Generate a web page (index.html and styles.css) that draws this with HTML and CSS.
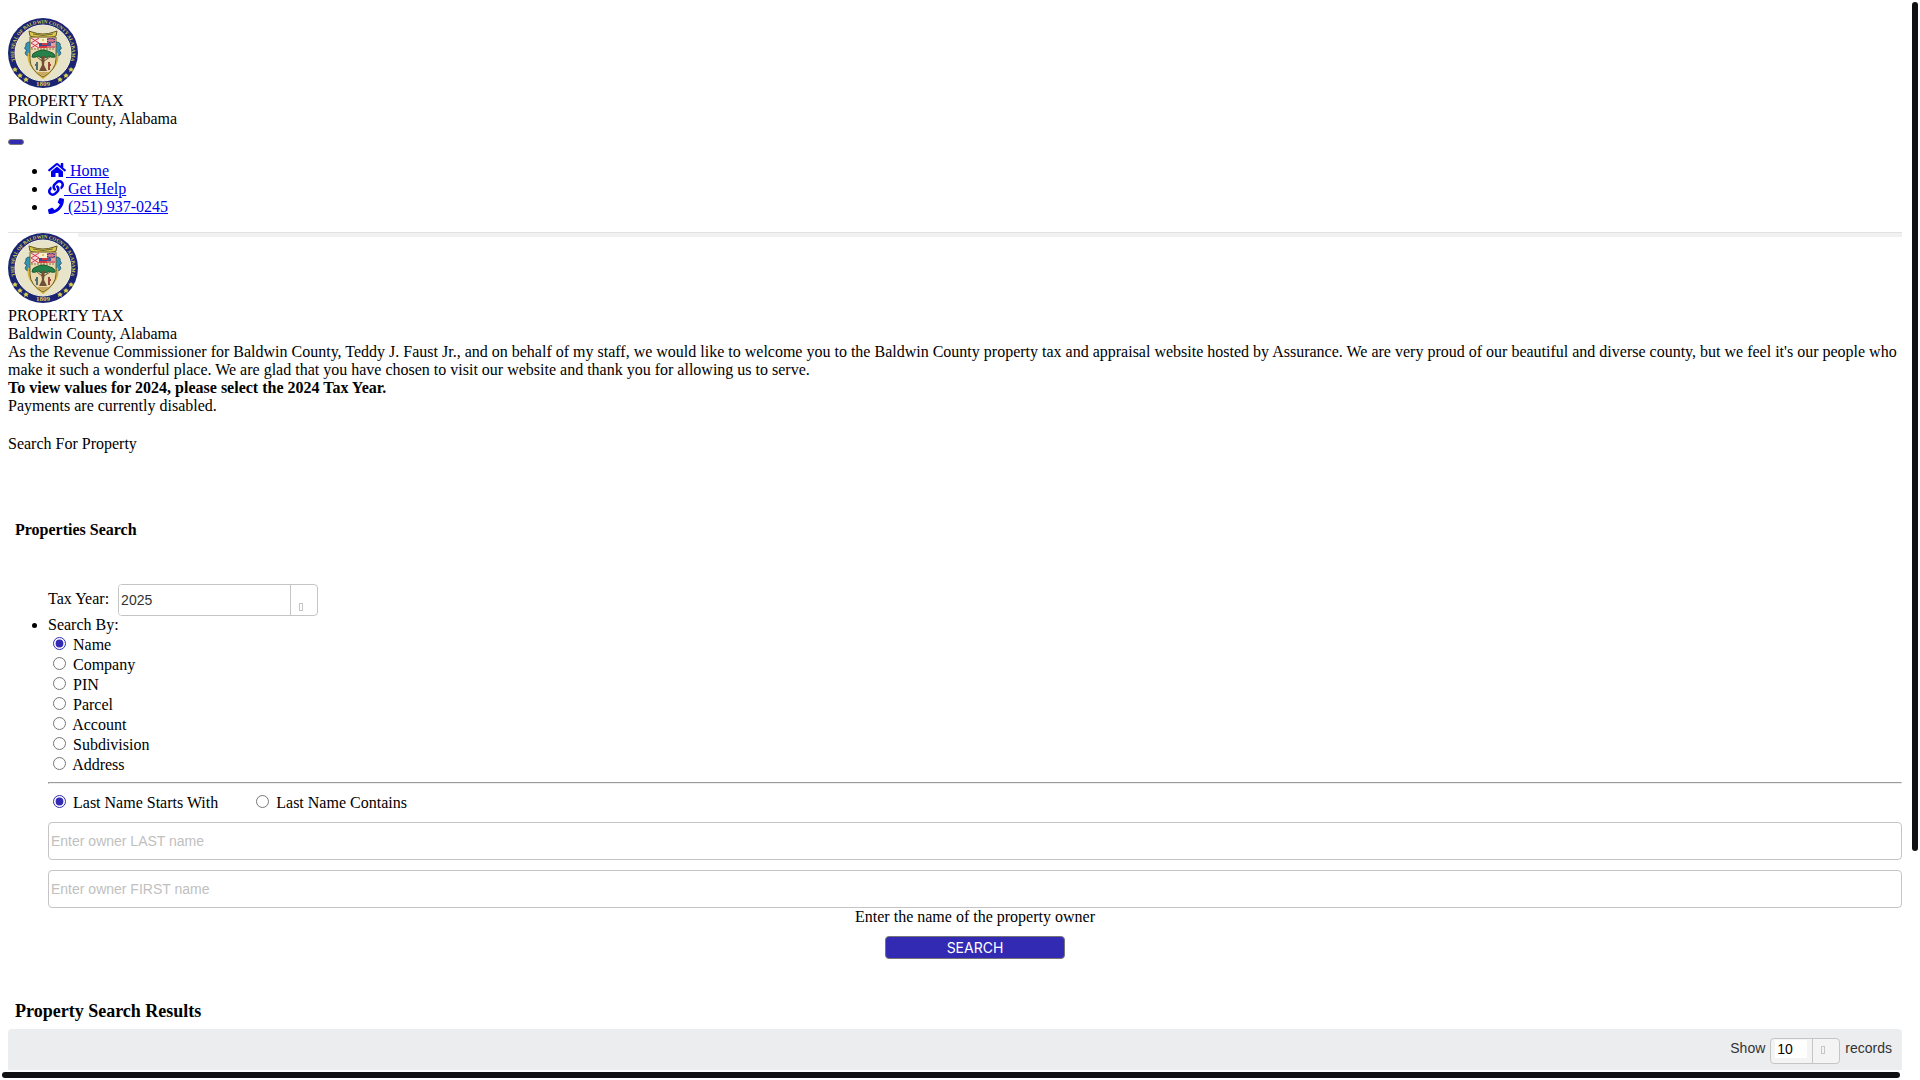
FILE: index.html
```html
<!DOCTYPE html>
<html lang="en">
<head>
<meta charset="UTF-8">
<meta name="viewport" content="width=device-width, initial-scale=1.0">
<title>Property Tax - Baldwin County, Alabama</title>
<link rel="stylesheet" href="styles.css">
</head>
<body>

<div class="page">

  <header class="header">
    <svg class="seal" viewBox="0 0 70 70" role="img" aria-label="Seal of Baldwin County">
      <g id="seal">
        <circle cx="35" cy="35" r="35" fill="#1b2472"/>
        <circle cx="35" cy="35" r="28" fill="#e8e4c9" stroke="#f6f4e4" stroke-width="1"/>
        <path id="ring" d="M8 45 A29 29 0 1 1 62 45" fill="none"/>
        <text class="seal-text" font-size="5"><textPath href="#ring" startOffset="50%" text-anchor="middle">THE SEAL OF BALDWIN COUNTY ALABAMA</textPath></text>
        <text class="seal-text" x="35" y="68" font-size="7" text-anchor="middle">1809</text>
        <g fill="#d8cf50">
          <path id="star" d="M7 49l1 1.600 1.900.2-1.400 1.300.4 1.900L7 53l-1.900 1 .4-1.900-1.400-1.300 1.900-.2z"/>
          <use href="#star" x="5" y="6"/>
          <use href="#star" x="11" y="10"/>
          <use href="#star" x="56" y="0"/>
          <use href="#star" x="51" y="6"/>
          <use href="#star" x="45" y="10"/>
        </g>
        <!-- mantling -->
        <path d="M22 24q-5 0-4 4q-3 3 1 4q-4 4 1 6l3-1zM48 24q5 0 4 4q3 3-1 4q4 4-1 6l-3-1z" fill="#3595b5" stroke="#27617e" stroke-width="1"/>
        <path d="M21 35q-2 8 4 15q4 6 10 10q6-4 10-10q6-7 4-15" fill="none" stroke="#d9b33c" stroke-width="2"/>
        <!-- scroll on top of the shield -->
        <path d="M21 13l3 1q11 4 22 0l3-1-1 5-3 1q-10 3-20 0l-3-1z" fill="#d9c94e" stroke="#665b25" stroke-width="1"/>
        <path d="M25 16q10 3 20 0" fill="none" stroke="#71652b" stroke-width="1"/>
        <!-- shield -->
        <path d="M22 19h26v22q0 11-13 18q-13-7-13-18z" fill="#e9d9ae" stroke="#70602c" stroke-width="1"/>
        <path d="M23 20h8v10h-8z" fill="#f5d9d9"/>
        <path d="M23 20l8 5m0-5l-8 5m0 0l8 5m0-5l-8 5" stroke="#d23a48" stroke-width="1"/>
        <path d="M31 20h8v5h-8z" fill="#f6f0d0"/>
        <circle cx="35" cy="22" r="1" fill="#ddb840"/>
        <path d="M31 25h8v5h-8z" fill="#d33c43"/>
        <path d="M31 27h8v1h-8zM31 25h3v3h-3z" fill="#3c4689"/>
        <path d="M39 20h8v5h-8z" fill="#334289"/>
        <path d="M39 20l8 5m0-5l-8 5M43 20v5M39 22.500h8" stroke="#e77883" stroke-width="1"/>
        <path d="M39 25h8v5h-8z" fill="#e6a0a0"/>
        <path d="M39 25h4v3h-4z" fill="#4d5790"/>
        <path d="M39 29h8" stroke="#c23f4c" stroke-width="1"/>
        <path d="M23 31h24" stroke="#8f7045" stroke-width="1" stroke-dasharray="2 1"/>
        <!-- oak tree -->
        <path d="M24 39q0-4 4-5q7-4 14 0q5 1 5 5q-4 1-6-1q-2 3-5 1q-3 2-6-1q-3 2-6 1z" fill="#26814a" stroke="#14592f" stroke-width="1"/>
        <path d="M33 38l1 9-3 6h8l-3-6 1-9z" fill="#6f5034"/>
        <path d="M34 43l-5-4m7 4l6-4" stroke="#6f5034" stroke-width="1"/>
        <path d="M28 54h14l-7 4z" fill="#c9a860"/>
        <path d="M29 44v8M27 47h3" stroke="#4d6f73" stroke-width="2"/>
        <path d="M41 44v8M40 47h3" stroke="#9a4939" stroke-width="2"/>
      </g>
    </svg>
    <div>PROPERTY TAX</div>
    <div>Baldwin County, Alabama</div>
    <button class="menu-toggle" type="button" aria-label="Menu"></button>
    <ul class="nav">
      <li><a href="#"><svg class="icon icon-home" viewBox="0 0 576 512" aria-hidden="true"><path d="M280.37 148.26L96 300.11V464a16 16 0 0 0 16 16l112.06-.29a16 16 0 0 0 15.92-16V368a16 16 0 0 1 16-16h64a16 16 0 0 1 16 16v95.64a16 16 0 0 0 16 16.05L464 480a16 16 0 0 0 16-16V300L295.67 148.26a12.19 12.19 0 0 0-15.3 0zM571.6 251.47L488 182.56V44.05a12 12 0 0 0-12-12h-56a12 12 0 0 0-12 12v72.61L318.47 43a48 48 0 0 0-61 0L4.34 251.47a12 12 0 0 0-1.6 16.9l25.5 31A12 12 0 0 0 45.15 301l235.22-193.74a12.19 12.19 0 0 1 15.3 0L530.9 301a12 12 0 0 0 16.9-1.6l25.5-31a12 12 0 0 0-1.7-16.93z"/></svg> Home</a></li>
      <li><a href="#"><svg class="icon" viewBox="0 0 512 512" aria-hidden="true"><path d="M326.612 185.391c59.747 59.809 58.927 155.698.36 214.59-.11.12-.24.25-.36.37l-67.2 67.2c-59.27 59.27-155.699 59.262-214.96 0-59.27-59.26-59.27-155.7 0-214.96l37.106-37.106c9.84-9.84 26.786-3.3 27.294 10.606.648 17.722 3.826 35.527 9.69 52.721 1.986 5.822.567 12.262-3.783 16.612l-13.087 13.087c-28.026 28.026-28.905 73.66-1.155 101.96 28.024 28.579 74.086 28.749 102.325.51l67.2-67.19c28.191-28.191 28.073-73.757 0-101.83-3.701-3.694-7.429-6.564-10.341-8.569a16.037 16.037 0 0 1-6.947-12.606c-.396-10.567 3.348-21.456 11.698-29.806l21.054-21.055c5.521-5.521 14.182-6.199 20.584-1.731a152.482 152.482 0 0 1 20.522 17.197zM467.547 44.449c-59.261-59.262-155.69-59.27-214.96 0l-67.2 67.2c-.12.12-.25.25-.36.37-58.566 58.892-59.387 154.781.36 214.59a152.454 152.454 0 0 0 20.521 17.196c6.402 4.468 15.064 3.789 20.584-1.731l21.054-21.055c8.35-8.35 12.094-19.239 11.698-29.806a16.037 16.037 0 0 0-6.947-12.606c-2.912-2.005-6.64-4.875-10.341-8.569-28.073-28.073-28.191-73.639 0-101.83l67.2-67.19c28.239-28.239 74.3-28.069 102.325.51 27.75 28.3 26.872 73.934-1.155 101.96l-13.087 13.087c-4.35 4.35-5.769 10.79-3.783 16.612 5.864 17.194 9.042 34.999 9.69 52.721.509 13.906 17.454 20.446 27.294 10.606l37.106-37.106c59.271-59.259 59.271-155.699.001-214.959z"/></svg> Get Help</a></li>
      <li><a href="tel:2519370245"><svg class="icon" viewBox="0 0 512 512" aria-hidden="true"><path d="M493.4 24.6l-104-24c-11.3-2.6-22.9 3.3-27.5 13.9l-48 112c-4.2 9.8-1.4 21.3 6.9 28l60.6 49.6c-36 76.7-98.9 140.5-177.2 177.2l-49.6-60.6c-6.8-8.3-18.2-11.1-28-6.9l-112 48C3.9 366.5-2 378.1.6 389.4l24 104C27.1 504.2 36.7 512 48 512c256.1 0 464-207.5 464-464 0-11.2-7.7-20.9-18.6-23.4z"/></svg> (251) 937-0245</a></li>
    </ul>
  </header>

  <section class="welcome">
    <svg class="seal" viewBox="0 0 70 70" role="img" aria-label="Seal of Baldwin County"><use href="#seal"/></svg>
    <div>PROPERTY TAX</div>
    <div>Baldwin County, Alabama</div>
    <div>As the Revenue Commissioner for Baldwin County, Teddy J. Faust Jr., and on behalf of my staff, we would like to welcome you to the Baldwin County property tax and appraisal website hosted by Assurance. We are very proud of our beautiful and diverse county, but we feel it's our people who make it such a wonderful place. We are glad that you have chosen to visit our website and thank you for allowing us to serve.</div>
    <div><b>To view values for 2024, please select the 2024 Tax Year.</b></div>
    <div>Payments are currently disabled.</div>
  </section>

  <div class="crumb">Search For Property</div>

  <h4 class="search-title">Properties Search</h4>

  <form class="search-form">
    <div class="tax-year">
      <label for="year">Tax Year:</label>
      <span class="dropdown">
        <select id="year"><option>2025</option><option>2024</option></select>
        <span class="dropdown-arrow"></span>
      </span>
    </div>

    <ul class="criteria">
      <li>Search By:
        <div class="radio-row"><input type="radio" name="by" id="by-name" checked> <label for="by-name">Name</label></div>
        <div class="radio-row"><input type="radio" name="by" id="by-company"> <label for="by-company">Company</label></div>
        <div class="radio-row"><input type="radio" name="by" id="by-pin"> <label for="by-pin">PIN</label></div>
        <div class="radio-row"><input type="radio" name="by" id="by-parcel"> <label for="by-parcel">Parcel</label></div>
        <div class="radio-row"><input type="radio" name="by" id="by-account"> <label for="by-account">Account</label></div>
        <div class="radio-row"><input type="radio" name="by" id="by-subdivision"> <label for="by-subdivision">Subdivision</label></div>
        <div class="radio-row"><input type="radio" name="by" id="by-address"> <label for="by-address">Address</label></div>
      </li>
    </ul>

    <hr>

    <div class="radio-row">
      <input type="radio" name="match" id="starts" checked> <label class="match-label" for="starts">Last Name Starts With</label><input type="radio" name="match" id="contains"> <label for="contains">Last Name Contains</label>
    </div>
    <input class="name-input" type="text" placeholder="Enter owner LAST name" aria-label="Owner last name">
    <input class="name-input" type="text" placeholder="Enter owner FIRST name" aria-label="Owner first name">
    <div class="hint">Enter the name of the property owner</div>
    <button class="search-button" type="button">SEARCH</button>
  </form>

  <h3 class="results-title">Property Search Results</h3>
  <div class="results-bar">
    <label for="count">Show</label>
    <span class="dropdown dropdown-small">
      <select id="count"><option>10</option><option>25</option><option>50</option></select>
      <span class="dropdown-arrow"></span>
    </span>
    <span>records</span>
  </div>

</div>

<!-- scroll thumbs -->
<div class="thumb thumb-vertical"></div>
<div class="thumb thumb-horizontal"></div>

</body>
</html>
```

FILE: styles.css
```css
*,
*::before {
  box-sizing: border-box;
}

body {
  margin: 0;
  height: 100vh;
  overflow: hidden;
  background: #fff;
  color: #000;
  font: 16px/18px "Liberation Serif", serif;
}

.page {
  height: calc(100vh - 10px);
  margin-right: 10px;
  padding: 8px 8px 0;
  overflow: hidden;
}

/* header */
.header {
  padding: 10px 0 16px;
  border-bottom: 1px solid #e2e2e2;
  box-shadow: 0 4px 0 #f1f1f1;
}

.seal {
  display: block;
  position: relative;
  width: 70px;
  height: 70px;
  margin-bottom: 4px;
  background: #fff;
  overflow: visible;
}

.seal-text {
  fill: #d8cf50;
  font-family: "Liberation Serif", serif;
  font-weight: bold;
}

.menu-toggle {
  display: block;
  width: 16px;
  height: 6px;
  margin-top: 11px;
  padding: 0;
  background: #322ab3;
  border: 1px solid #767676;
  border-radius: 3px;
}

.nav {
  margin: 17px 0 0;
  padding-left: 40px;
}

.nav a {
  color: #00e;
}

.icon {
  width: 16px;
  height: 16px;
  vertical-align: -2px;
  fill: currentColor;
}

.icon-home {
  width: 18px;
}

.crumb {
  margin-top: 20px;
}

/* search form */
.search-title {
  margin: 68px 7px 45px;
  font-size: 16px;
}

.search-form {
  padding-left: 40px;
}

.tax-year {
  display: flex;
  gap: 9px;
}

.tax-year label {
  margin-top: 6px;
}

.dropdown {
  display: flex;
  width: 200px;
  height: 32px;
  border: 1px solid #c5c5c5;
  border-radius: 4px;
  overflow: hidden;
}

.dropdown select {
  flex: 1;
  appearance: none;
  padding: 0 2px;
  border: 0;
  background: #fff;
  color: #333;
  font: 14px "Liberation Sans", sans-serif;
}

.dropdown-arrow {
  display: flex;
  width: 27px;
  border-left: 1px solid #c5c5c5;
}

/* empty glyph box */
.dropdown-arrow::before {
  content: "";
  width: 4px;
  height: 8px;
  margin: auto auto 4px 8px;
  border: 1px solid #c5c5c5;
}

.criteria {
  margin: 0;
  padding: 0;
}

.radio-row {
  height: 20px;
  line-height: 20px;
}

.radio-row input {
  margin: 3px 3px 0 5px;
  accent-color: #322ab3;
}

hr {
  margin: 8px 0;
}

.match-label {
  margin-right: 33px;
}

.name-input {
  display: block;
  width: 100%;
  height: 38px;
  margin-top: 10px;
  padding: 0 2px;
  border: 1px solid #c5c5c5;
  border-radius: 4px;
  font: 14px "Liberation Sans", sans-serif;
}

.name-input::placeholder {
  color: #c0c0c0;
}

.hint {
  text-align: center;
}

.search-button {
  display: block;
  width: 180px;
  height: 23px;
  margin: 10px auto 0;
  padding: 0;
  background: #322ab3;
  border: 1px solid #767676;
  border-radius: 4px;
  color: #fff;
  font: 14px Inter, sans-serif;
}

/* results */
.results-title {
  margin: 41px 7px 7px;
  font-size: 18px;
  line-height: 22px;
}

.results-bar {
  display: flex;
  justify-content: flex-end;
  gap: 5px;
  height: 60px;
  padding: 9px 10px;
  background: #ecedef;
  border-radius: 4px;
  color: #333;
  font: 14px/20px "Liberation Sans", sans-serif;
}

.dropdown-small {
  width: 70px;
  height: 26px;
  padding-left: 4px;
  background: #f4f4f4;
}

.dropdown-small select {
  height: 18px;
  margin: 1px 5px 0 0;
  color: #000;
}

.dropdown-small .dropdown-arrow::before {
  margin: 7px auto auto 8px;
}

.thumb {
  position: fixed;
  background: #101012;
  border-radius: 3px;
}

.thumb-vertical {
  top: 2px;
  right: 2px;
  width: 6px;
  height: 849px;
}

.thumb-horizontal {
  right: 20px;
  bottom: 2px;
  left: 2px;
  height: 6px;
}
```
